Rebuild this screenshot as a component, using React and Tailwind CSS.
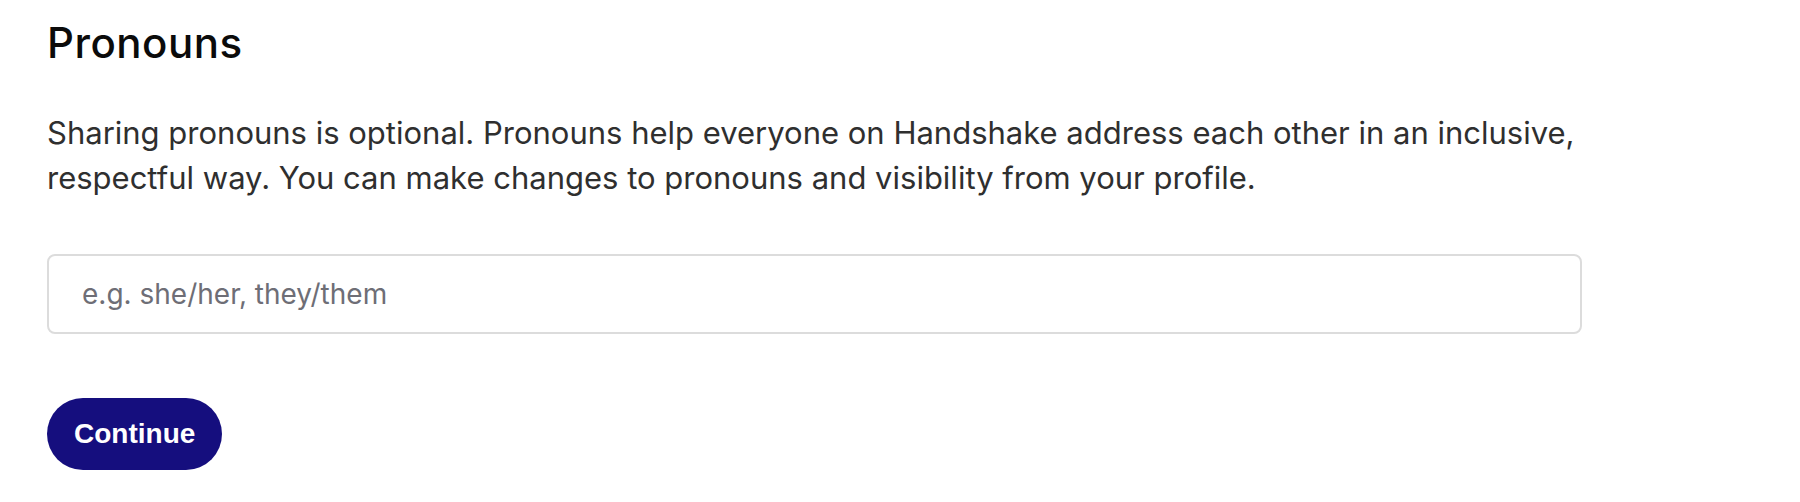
import React, { useState } from "react";

export default function App() {
    const [pronouns, setPronouns] = useState("");

    return (
        <div className="min-h-screen bg-white font-['Inter',sans-serif]">
            <div className="w-[1535px] ml-[47px] pt-[18px]">
                <h1 className="text-[42px] leading-[50px] font-medium text-[#0b0b0b] tracking-[0.5px]">
                    Pronouns
                </h1>
                <p className="mt-[42px] text-[31px] leading-[45px] text-[#2f2f2f]">
                    Sharing pronouns is optional. Pronouns help everyone on Handshake address each other in an inclusive,
                    respectful way. You can make changes to pronouns and visibility from your profile.
                </p>
                <input
                    type="text"
                    value={pronouns}
                    onChange={(e) => setPronouns(e.target.value)}
                    placeholder="e.g. she/her, they/them"
                    className="mt-[54px] block w-full h-[80px] px-[33px] rounded-[8px] border-2 border-[#dcdcdc] text-[28px] text-[#2f2f2f] placeholder:text-[#6e6e76] outline-none"
                />
                <button className="mt-[64px] h-[72px] px-[27px] rounded-full bg-[#150e7e] text-white text-[28px] font-bold font-['Liberation_Sans',sans-serif]">
                    Continue
                </button>
            </div>
        </div>
    );
}
